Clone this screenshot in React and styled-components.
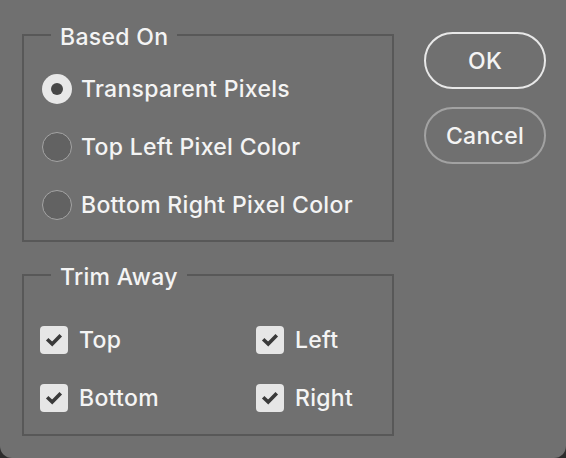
import React from "react";
import styled, { createGlobalStyle } from "styled-components";

const Global = createGlobalStyle`
  html, body { margin: 0; padding: 0; background: #2c2c2c; }
  * { box-sizing: border-box; }
`;

const Dialog = styled.div`
  width: 566px;
  height: 458px;
  background: #707070;
  border-radius: 0 0 12px 12px;
  display: flex;
  align-items: flex-start;
  padding: 0 20px 0 22px;
  gap: 30px;
  font-family: Inter, "Liberation Sans", sans-serif;
  color: #f4f4f4;
  -webkit-font-smoothing: antialiased;
`;

const LeftColumn = styled.div`
  width: 372px;
  display: flex;
  flex-direction: column;
  gap: 20px;
  padding-top: 22px;
`;

const Group = styled.fieldset`
  margin: 0;
  border: 2px solid #585858;
  padding: 0;
  min-width: 0;
`;

const Legend = styled.legend`
  margin-left: 27px;
  padding: 4px 9px 0;
  font-size: 23px;
  line-height: 22px;
  font-weight: 500;
  letter-spacing: 0.3px;
`;

const RadioList = styled.div`
  display: flex;
  flex-direction: column;
  padding: 12px 0 6px 18px;
`;

const Row = styled.label`
  height: 58px;
  display: flex;
  align-items: center;
  gap: 9px;
  font-size: 23px;
  font-weight: 500;
  letter-spacing: 0.3px;
  white-space: nowrap;
`;

const Radio = styled.span`
  width: 30px;
  height: 30px;
  border-radius: 50%;
  flex: none;
  display: flex;
  align-items: center;
  justify-content: center;
  background: ${(p) => (p.$checked ? "#e8e8e8" : "#626262")};
  border: ${(p) => (p.$checked ? "none" : "1.5px solid #a4a4a4")};
  &::after {
    content: "";
    display: ${(p) => (p.$checked ? "block" : "none")};
    width: 12px;
    height: 12px;
    border-radius: 50%;
    background: #484848;
  }
`;

const CheckGrid = styled.div`
  display: grid;
  grid-template-columns: 216px 1fr;
  padding: 23px 0 7px 16px;
`;

const Box = styled.span`
  width: 28px;
  height: 28px;
  border-radius: 4px;
  background: #e6e6e6;
  flex: none;
  display: flex;
  align-items: center;
  justify-content: center;
`;

const CheckRow = styled(Row)`
  gap: 11px;
`;

const Buttons = styled.div`
  display: flex;
  flex-direction: column;
  gap: 18px;
  padding-top: 32px;
`;

const Button = styled.button`
  width: 122px;
  height: 57px;
  border-radius: 29px;
  background: transparent;
  border: 2px solid ${(p) => (p.$primary ? "#e8e8e8" : "#a2a2a2")};
  color: #f4f4f4;
  font-family: inherit;
  font-size: 23px;
  font-weight: 500;
  letter-spacing: 0.3px;
  padding: 0;
`;

const Check = () => (
  <svg width="18" height="16" viewBox="0 0 18 16">
    <path d="M3.5 8.5 L7.2 12 L14.5 4.5" fill="none" stroke="#3a3a3a" strokeWidth="3.6" strokeLinecap="square" />
  </svg>
);

export default function App() {
  const radios = ["Transparent Pixels", "Top Left Pixel Color", "Bottom Right Pixel Color"];
  const checks = ["Top", "Left", "Bottom", "Right"];
  return (
    <>
      <Global />
      <Dialog>
        <LeftColumn>
          <Group>
            <Legend>Based On</Legend>
            <RadioList>
              {radios.map((r, i) => (
                <Row key={r}>
                  <Radio $checked={i === 0} />
                  {r}
                </Row>
              ))}
            </RadioList>
          </Group>
          <Group>
            <Legend>Trim Away</Legend>
            <CheckGrid>
              {checks.map((c) => (
                <CheckRow key={c}>
                  <Box>
                    <Check />
                  </Box>
                  {c}
                </CheckRow>
              ))}
            </CheckGrid>
          </Group>
        </LeftColumn>
        <Buttons>
          <Button $primary>OK</Button>
          <Button>Cancel</Button>
        </Buttons>
      </Dialog>
    </>
  );
}
